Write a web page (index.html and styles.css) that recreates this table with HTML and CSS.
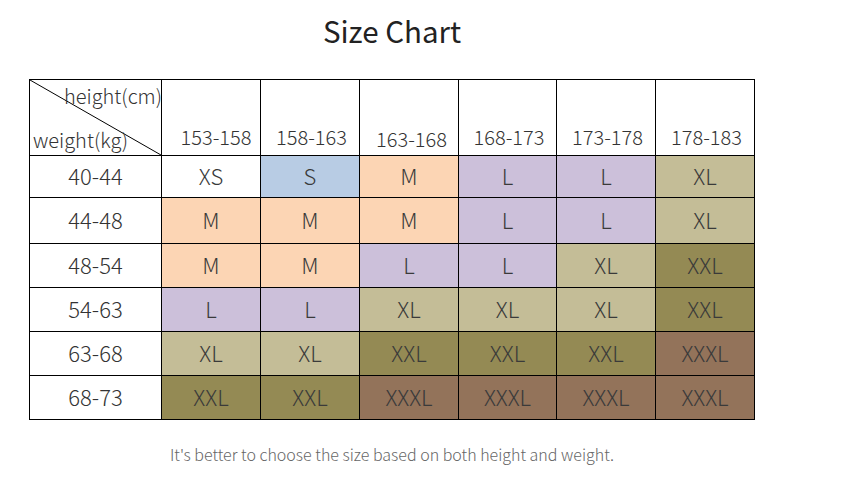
FILE: index.html
```html
<!DOCTYPE html>
<html>
<head>
<meta charset="utf-8">
<link rel="stylesheet" href="styles.css">
</head>
<body>
<div class="wrap">
  <h1 class="title">Size Chart</h1>
  <div class="chart">
    <div class="corner">
      <svg class="diag" viewBox="0 0 100 100" preserveAspectRatio="none"><line x1="0" y1="0" x2="100" y2="100" stroke="#000" stroke-width="1" vector-effect="non-scaling-stroke"/></svg>
      <span class="c-h">height(cm)</span>
      <span class="c-w">weight(kg)</span>
    </div>
    <div class="hd first">153-158</div>
    <div class="hd">158-163</div>
    <div class="hd low">163-168</div>
    <div class="hd">168-173</div>
    <div class="hd">173-178</div>
    <div class="hd">178-183</div>

    <div class="rl">40-44</div>
    <div class="c w">XS</div><div class="c b">S</div><div class="c p">M</div><div class="c v">L</div><div class="c v">L</div><div class="c k">XL</div>

    <div class="rl">44-48</div>
    <div class="c p">M</div><div class="c p">M</div><div class="c p">M</div><div class="c v">L</div><div class="c v">L</div><div class="c k">XL</div>

    <div class="rl">48-54</div>
    <div class="c p">M</div><div class="c p">M</div><div class="c v">L</div><div class="c v">L</div><div class="c k">XL</div><div class="c o">XXL</div>

    <div class="rl">54-63</div>
    <div class="c v">L</div><div class="c v">L</div><div class="c k">XL</div><div class="c k">XL</div><div class="c k">XL</div><div class="c o">XXL</div>

    <div class="rl">63-68</div>
    <div class="c k">XL</div><div class="c k">XL</div><div class="c o">XXL</div><div class="c o">XXL</div><div class="c o">XXL</div><div class="c r">XXXL</div>

    <div class="rl">68-73</div>
    <div class="c o">XXL</div><div class="c o">XXL</div><div class="c r">XXXL</div><div class="c r">XXXL</div><div class="c r">XXXL</div><div class="c r">XXXL</div>
  </div>
  <p class="note">It's better to choose the size based on both height and weight.</p>
</div>
</body>
</html>
```
FILE: styles.css
```css
html, body {
  margin: 0;
  padding: 0;
  background: #fff;
}
body {
  font-family: "Noto Sans CJK SC", "Noto Sans", sans-serif;
  font-weight: 300;
  color: #333;
}
.wrap {
  width: 726px;
  margin-left: 29px;
  display: flex;
  flex-direction: column;
  align-items: stretch;
}
.title {
  margin: 0;
  height: 79px;
  line-height: 60px;
  font-size: 29.5px;
  font-weight: 400;
  text-align: center;
  color: #222;
}
.chart {
  display: grid;
  grid-template-columns: 131px 98px 98px 98px 97px 98px 98px;
  grid-template-rows: 75px 41px 45px 43px 43px 43px 43px;
  gap: 1px;
  padding: 1px;
  background: #000;
}
.chart > div {
  background: #fff;
}
.corner {
  position: relative;
  display: flex;
  flex-direction: column;
  justify-content: space-between;
  font-size: 20px;
  line-height: 22px;
  color: #333;
}
.diag {
  position: absolute;
  left: 0;
  top: 0;
  width: 100%;
  height: 100%;
}
.c-h {
  align-self: flex-end;
  margin-top: 5px;
  margin-right: -1px;
  position: relative;
}
.c-w {
  align-self: flex-start;
  margin-left: 3px;
  margin-bottom: 4px;
  position: relative;
}
.hd {
  display: flex;
  align-items: flex-end;
  justify-content: center;
  font-size: 20px;
  line-height: 22px;
  padding: 0 0 7px 3px;
  box-sizing: border-box;
}
.hd.first {
  padding-left: 10px;
}
.hd.low {
  padding-bottom: 5px;
  padding-left: 5px;
}
.rl, .c {
  display: flex;
  align-items: center;
  justify-content: center;
  font-size: 22px;
  padding-bottom: 4px;
  box-sizing: border-box;
}
.c { color: #3a3a3a; }
.w { background: #fff; }
.chart > .b { background: #b8cce4; }
.chart > .p { background: #fcd5b4; }
.chart > .v { background: #ccc0da; }
.chart > .k { background: #c4bd97; }
.chart > .o { background: #948a54; }
.chart > .r { background: #93735a; }
.note {
  margin: 22px 0 0;
  text-align: center;
  font-size: 16px;
  color: #666;
}
```
